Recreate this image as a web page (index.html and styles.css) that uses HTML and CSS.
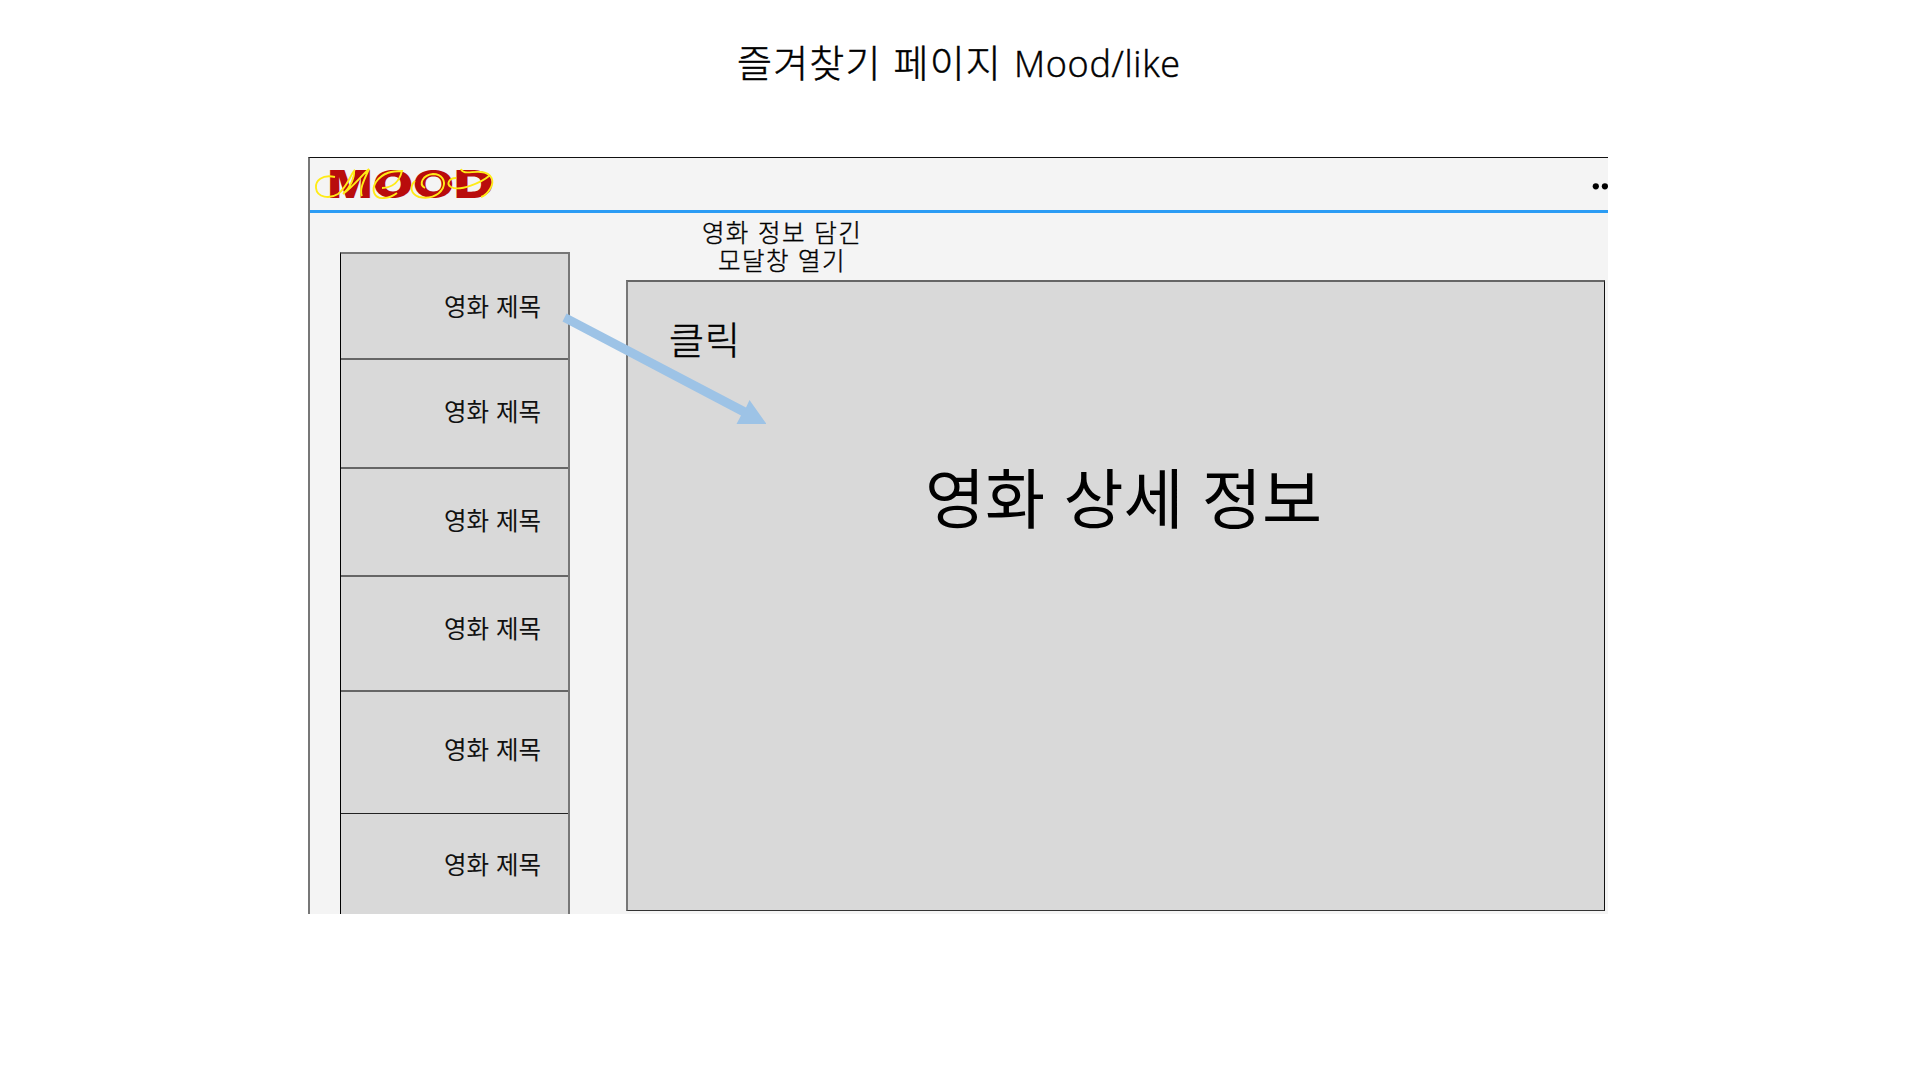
FILE: index.html
```html
<!DOCTYPE html>
<html lang="ko">
<head>
<meta charset="utf-8">
<title>Mood/like</title>
<link rel="stylesheet" href="styles.css">
</head>
<body>
<h1 class="title"><span class="title-ko">즐겨찾기 페이지</span><span class="title-en">Mood/like</span></h1>
<main class="frame">
  <header class="bar">
    <svg class="logo" width="184" height="44" viewBox="312 162 184 44" role="img" aria-label="MOOD">
      <g class="logo-word">
        <text x="328" y="198" textLength="44" lengthAdjust="spacingAndGlyphs">M</text>
        <text x="373" y="198" textLength="40" lengthAdjust="spacingAndGlyphs">O</text>
        <text x="413" y="198" textLength="41" lengthAdjust="spacingAndGlyphs">O</text>
        <text x="454" y="198" textLength="40" lengthAdjust="spacingAndGlyphs">D</text>
      </g>
      <g class="logo-swash">
        <path d="M335 177C322 174 315 181 316 188C317 198 330 199 338 194C347 187 350 176 354 171C355 177 350 188 343 194C354 186 360 177 369 169C364 180 359 190 362 196"/>
        <path d="M382 188C386 188 398 187 402 171C393 171 383 172 376 182C371 190 374 199 384 198C389 198 393 196 397 193"/>
        <path d="M425 188C418 184 423 175 433 174C442 174 446 181 443 188C438 197 428 199 419 197C411 194 409 187 415 181"/>
        <path d="M456 178C449 178 446 184 451 187C460 192 482 182 489 176M461 169C463 175 472 171 481 172C492 173 495 181 490 189C487 194 484 196 481 197"/>
      </g>
    </svg>
    <svg class="dots" width="16" height="8" viewBox="0 0 16 8"><circle cx="3.8" cy="4.3" r="3.1"/><circle cx="12.9" cy="4.3" r="3.1"/></svg>
  </header>
  <div class="content">
    <ul class="list">
      <li class="item item-1">영화 제목</li>
      <li class="item item-2">영화 제목</li>
      <li class="item item-3">영화 제목</li>
      <li class="item item-4">영화 제목</li>
      <li class="item item-5">영화 제목</li>
      <li class="item item-6">영화 제목</li>
    </ul>
    <section class="detail">
      <p class="note">영화 정보 담긴<br>모달창 열기</p>
      <div class="panel">
        <p class="click">클릭</p>
        <h2 class="heading">영화 상세 정보</h2>
      </div>
    </section>
  </div>
  <svg class="arrow" width="204" height="112" viewBox="562 312 204 112"><path d="M566.5 313.5L746 407.5L749.5 400L766.5 424H736.5L741 415.5L562.5 321.5Z"/></svg>
</main>
</body>
</html>
```

FILE: styles.css
```css
* { box-sizing: border-box; margin: 0; padding: 0; }
body { background: #fff; color: #000; font-family: "Noto Sans CJK KR", sans-serif; }
.title { display: flex; align-items: baseline; height: 157px; padding: 33px 0 0 737px; font-size: 38px; line-height: 56px; font-weight: 300; white-space: nowrap; -webkit-text-stroke: 0.5px #000; }
.title-ko { letter-spacing: 1.2px; width: 277px; }
.title-en { font-family: "Open Sans", sans-serif; font-size: 36px; letter-spacing: 0.7px; }
.frame { position: relative; display: flex; flex-direction: column; width: 1300px; height: 757px; margin-left: 308px; background: #f4f4f4; border-left: 2px solid #777; border-top: 1px solid #111; overflow: hidden; }
.bar { display: flex; justify-content: space-between; align-items: flex-start; height: 55px; flex: none; padding: 4px 0 0 2px; border-bottom: 3px solid #2b9cf4; }
.logo-word { fill: #b90c0c; font-family: Inter, sans-serif; font-weight: 900; font-size: 38px; }
.logo-swash { fill: none; stroke: #ffeb16; stroke-width: 1.9; }
.dots { margin-top: 20px; }
.content { display: flex; flex: 1; padding-left: 30px; min-height: 0; }
.list { width: 230px; margin-top: 39px; list-style: none; background: #d9d9d9; border: 2px solid #777; border-left: 1px solid #000; border-bottom: 0; }
.item { padding-right: 27px; text-align: right; font-size: 24.5px; line-height: 36px; border-bottom: 2px solid #666; color: #111; }
.item-1 { height: 106px; padding-top: 34px; }
.item-2 { height: 109px; padding-top: 33px; }
.item-3 { height: 108px; padding-top: 33px; }
.item-4 { height: 115px; padding-top: 33px; }
.item-5 { height: 122px; padding-top: 39px; border-bottom: 1px solid #222; }
.item-6 { height: 100px; padding-top: 32px; border-bottom: 0; }
.detail { width: 979px; margin-left: 56px; }
.note { height: 67px; padding: 5px 0 0 64px; width: 248px; text-align: center; font-size: 24.5px; line-height: 28px; letter-spacing: 1.4px; white-space: nowrap; font-weight: 300; -webkit-text-stroke: 0.4px #000; }
.panel { height: 631px; background: #d9d9d9; border: 2px solid #777; border-top-color: #666; border-right: 1px solid #111; border-bottom: 1px solid #333; }
.click { padding: 28px 0 0 41px; font-size: 38px; line-height: 56px; font-weight: 300; letter-spacing: 1px; -webkit-text-stroke: 0.5px #000; }
.heading { padding: 80px 0 0 297px; font-size: 65.3px; line-height: 98px; font-weight: 400; white-space: nowrap; }
.arrow { position: absolute; left: 252px; top: 154px; fill: #9dc3e6; }
```
